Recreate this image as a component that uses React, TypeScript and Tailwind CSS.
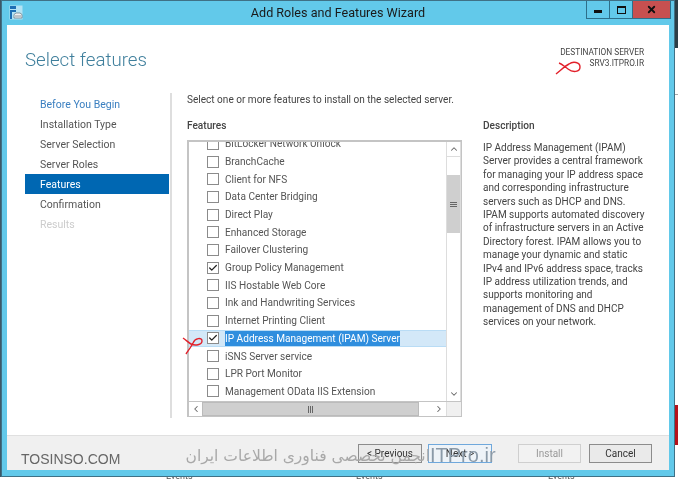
import { Check, ChevronDown, ChevronLeft, ChevronRight, ChevronUp, X } from 'lucide-react';

const steps = [
    { label: 'Before You Begin', className: 'text-[#3a7fc0]' },
    { label: 'Installation Type', className: 'text-[#555]' },
    { label: 'Server Selection', className: 'text-[#555]' },
    { label: 'Server Roles', className: 'text-[#555]' },
    { label: 'Features', className: 'bg-[#0067b2] text-white' },
    { label: 'Confirmation', className: 'text-[#555]' },
    { label: 'Results', className: 'text-[#ccc]' },
];

const features = [
    { label: 'BitLocker Network Unlock' },
    { label: 'BranchCache' },
    { label: 'Client for NFS' },
    { label: 'Data Center Bridging' },
    { label: 'Direct Play' },
    { label: 'Enhanced Storage' },
    { label: 'Failover Clustering' },
    { label: 'Group Policy Management', checked: true },
    { label: 'IIS Hostable Web Core' },
    { label: 'Ink and Handwriting Services' },
    { label: 'Internet Printing Client' },
    { label: 'IP Address Management (IPAM) Server', checked: true, selected: true },
    { label: 'iSNS Server service' },
    { label: 'LPR Port Monitor' },
    { label: 'Management OData IIS Extension' },
];

const description = [
    'IP Address Management (IPAM)',
    'Server provides a central framework',
    'for managing your IP address space',
    'and corresponding infrastructure',
    'servers such as DHCP and DNS.',
    'IPAM supports automated discovery',
    'of infrastructure servers in an Active',
    'Directory forest. IPAM allows you to',
    'manage your dynamic and static',
    'IPv4 and IPv6 address space, tracks',
    'IP address utilization trends, and',
    'supports monitoring and',
    'management of DNS and DHCP',
    'services on your network.',
];

function WizardIcon() {
    return (
        <svg width="14" height="15" viewBox="0 0 14 15">
            <rect x="0.5" y="0.5" width="13" height="14" fill="#d6eef8" opacity="0.7" />
            <rect x="1" y="1" width="6" height="3" fill="#1c6fb4" />
            <rect x="1" y="5" width="6" height="2" fill="#1c6fb4" />
            <rect x="1" y="5" width="2" height="9" fill="#1c6fb4" />
            <path d="M5 13V9.5L7 8h4l2 1.5V13z" fill="#f3f3f3" stroke="#6b7f8c" strokeWidth="0.8" />
            <path d="M6 11h6" stroke="#6b7f8c" strokeWidth="0.8" />
        </svg>
    );
}

function WindowButton({ kind }: { kind: 'min' | 'max' }) {
    return (
        <div className="w-[23px] h-[18px] border-l border-b border-[#2d6f8a] flex items-center justify-center">
            {kind === 'min' ? (
                <div className="w-[8px] h-[3px] mt-[3px] bg-[#111]" />
            ) : (
                <div className="w-[9px] h-[8px] border border-t-2 border-[#111]" />
            )}
        </div>
    );
}

function FeatureRow({ label, checked, selected }: { label: string; checked?: boolean; selected?: boolean }) {
    return (
        <div className={`h-[17.7px] shrink-0 flex items-center pl-[18px] ${selected ? 'bg-[#d3e8f8] border-y border-[#b9dcf5]' : ''}`}>
            <div className="w-[12px] h-[12px] border border-[#8b8b8b] bg-white flex items-center justify-center shrink-0">
                {checked && <Check className="w-[10px] h-[10px] text-[#222]" strokeWidth={3} />}
            </div>
            <span className={`ml-[6px] text-[10.1px] whitespace-nowrap ${selected ? 'bg-[#2f8ede] text-white' : 'text-[#555]'}`}>{label}</span>
        </div>
    );
}

function Grip({ vertical }: { vertical?: boolean }) {
    return (
        <div className={`flex items-center justify-center gap-px ${vertical ? 'flex-col' : ''}`}>
            <div className={`bg-[#666] ${vertical ? 'w-[7px] h-px' : 'w-px h-[7px]'}`} />
            <div className={`bg-[#666] ${vertical ? 'w-[7px] h-px' : 'w-px h-[7px]'}`} />
            <div className={`bg-[#666] ${vertical ? 'w-[7px] h-px' : 'w-px h-[7px]'}`} />
        </div>
    );
}

function FeatureList() {
    return (
        <div className="w-[275px] h-[277px] border-2 border-[#c4c4c4] border-r border-b flex flex-col">
            <div className="flex-1 flex min-h-0">
                <div className="flex-1 overflow-hidden">
                    <div className="mt-[-7px]">
                        {features.map((f) => (
                            <FeatureRow key={f.label} {...f} />
                        ))}
                    </div>
                </div>
                <div className="w-[15px] border-x border-[#ddd] flex flex-col">
                    <div className="h-[15px] border-b border-[#ddd] flex items-center justify-center">
                        <ChevronUp className="w-[10px] h-[10px] text-[#666]" strokeWidth={2.5} />
                    </div>
                    <div className="mt-[18px] h-[58px] bg-[#cfcfcf] flex items-center justify-center">
                        <Grip vertical />
                    </div>
                    <div className="mt-auto h-[15px] flex items-center justify-center">
                        <ChevronDown className="w-[10px] h-[10px] text-[#666]" strokeWidth={2.5} />
                    </div>
                </div>
            </div>
            <div className="h-[15px] border-t border-[#c4c4c4] flex items-stretch shrink-0">
                <div className="w-[13px] flex items-center justify-center">
                    <ChevronLeft className="w-[10px] h-[10px] text-[#666]" strokeWidth={2.5} />
                </div>
                <div className="w-[217px] bg-[#cfcfcf] border border-[#bbb] flex items-center justify-center">
                    <Grip />
                </div>
                <div className="flex-1 flex items-center justify-end pr-[2px]">
                    <ChevronRight className="w-[10px] h-[10px] text-[#666]" strokeWidth={2.5} />
                </div>
                <div className="w-[15px] bg-[#f0f0f0] border-l border-[#ddd]" />
            </div>
        </div>
    );
}

export default function App() {
    return (
        <div className="w-[678px] h-[480px] relative overflow-hidden bg-white flex flex-col font-['Roboto',sans-serif] blur-[0.3px]">
            <div className="h-[477px] flex shrink-0">
                <div className="w-px bg-[#3d5868]" />
                <div className="w-[674px] bg-[#62c9ea] border-x border-b border-[#3f7186] flex flex-col">
                    {/* Title bar */}
                    <div className="h-[25px] grid grid-cols-[1fr_auto_1fr] shrink-0 border-t border-[#3f7186]">
                        <div className="pl-[7px] pt-[4px]">
                            <WizardIcon />
                        </div>
                        <div className="text-[12.6px] leading-[24px] text-[#1a1a1a]">Add Roles and Features Wizard</div>
                        <div className="flex justify-end items-start pr-[3px]">
                            <WindowButton kind="min" />
                            <WindowButton kind="max" />
                            <div className="w-[39px] h-[18px] bg-[#c75050] border-x border-b border-[#2d6f8a] flex items-center justify-center">
                                <X className="w-[11px] h-[11px] text-[#111]" strokeWidth={4} />
                            </div>
                        </div>
                    </div>

                    {/* Panel */}
                    <div className="flex-1 mx-[5px] mb-[6px] bg-white flex flex-col min-h-0">
                        <div className="h-[68px] shrink-0 flex justify-between pl-[18px] pr-[25px]">
                            <div className="pt-[21px] text-[18.7px] leading-[28px] font-light text-[#3f7f9c]">Select features</div>
                            <div className="pt-[22px] text-right text-[8.3px] leading-[11px] text-[#444]">
                                <div>DESTINATION SERVER</div>
                                <div>SRV3.ITPRO.IR</div>
                            </div>
                        </div>

                        <div className="flex-1 flex min-h-0">
                            <div className="ml-[18px] w-[144px] shrink-0 pt-px h-[325px]">
                                {steps.map((s) => (
                                    <div key={s.label} className={`h-[20px] pl-[15px] text-[10.5px] leading-[21px] ${s.className}`}>
                                        {s.label}
                                    </div>
                                ))}
                            </div>
                            <div className="ml-px w-[2px] h-[325px] bg-[#dedede]" />
                            <div className="ml-[15px] flex flex-col">
                                <div className="pt-px text-[10.05px] leading-[12px] text-[#444]">
                                    Select one or more features to install on the selected server.
                                </div>
                                <div className="flex mt-[13px] gap-[21px]">
                                    <div>
                                        <div className="h-[21px] text-[10.1px] leading-[13px] font-medium text-[#444]">Features</div>
                                        <FeatureList />
                                    </div>
                                    <div className="w-[180px]">
                                        <div className="h-[15px] text-[10.1px] leading-[13px] font-medium text-[#444]">Description</div>
                                        <div className="mt-[7px] text-[10px] leading-[13.4px] text-[#444] whitespace-nowrap">
                                            {description.map((line) => (
                                                <div key={line}>{line}</div>
                                            ))}
                                        </div>
                                    </div>
                                </div>
                            </div>
                        </div>

                        {/* Footer */}
                        <div className="h-[35px] shrink-0 bg-[#f0f0f0] border-t border-[#e0e0e0] flex justify-end pt-[8px] pr-[17px] text-[10px] text-[#333]">
                            <button className="w-[64px] h-[19px] border border-[#8c8c8c] bg-[#eaeaea] leading-[16px]">&lt; Previous</button>
                            <button className="ml-[6px] w-[64px] h-[19px] border border-[#6fa8dc] bg-[#eef3f8] leading-[16px]">Next &gt;</button>
                            <button className="ml-[26px] w-[63px] h-[19px] border border-[#cfcfcf] bg-[#f2f2f2] text-[#999] leading-[16px]">Install</button>
                            <button className="ml-[8px] w-[63px] h-[19px] border border-[#8c8c8c] bg-[#eaeaea] leading-[16px]">Cancel</button>
                        </div>
                    </div>
                </div>
                <div className="w-[3px] flex flex-col">
                    <div className="h-[48px] bg-[#2c3e46]" />
                    <div className="h-[47px] bg-white border-b border-[#aaa]" />
                    <div className="h-[310px] bg-white" />
                    <div className="h-[40px] bg-[#b5121b]" />
                </div>
            </div>

            {/* Desktop behind the window */}
            <div className="h-[3px] relative overflow-hidden text-[9px] leading-[9px] text-[#555]">
                <span className="absolute left-[166px] top-[-5px]">Events</span>
                <span className="absolute left-[356px] top-[-5px]">Events</span>
                <span className="absolute left-[548px] top-[-5px]">Events</span>
            </div>

            {/* Watermarks and pen marks on top of the capture */}
            <div className="absolute left-[21px] top-[450px] text-[14px] leading-[18px] text-[#666] font-['Liberation_Sans',sans-serif] pointer-events-none">
                TOSINSO.COM
            </div>
            <div
                dir="rtl"
                className="absolute left-[182px] top-[446px] w-[248px] whitespace-nowrap text-[15.5px] leading-[20px] text-[#a8a8a8] font-['DejaVu_Sans',sans-serif] pointer-events-none"
            >
                انجمن تخصصی فناوری اطلاعات ایران
            </div>
            <div className="absolute left-[430px] top-[444px] text-[20px] leading-[22px] text-[#8b9aa8] font-['Liberation_Sans',sans-serif] pointer-events-none">
                ITPro.ir
            </div>
            <svg className="absolute left-[553px] top-[58px] pointer-events-none" width="30" height="18" viewBox="0 0 30 18" fill="none">
                <path d="M3 16C8 12 12 8 16 6C20 3 27 4 27 9C27 14 20 15 15 11C12 9 9 6 6 5" stroke="#e2202a" strokeWidth="1.4" />
            </svg>
            <svg className="absolute left-[180px] top-[335px] pointer-events-none" width="26" height="22" viewBox="0 0 26 22" fill="none">
                <path d="M3 3C6 5 9 8 11 9C15 11 22 10 22 6C22 2 15 3 13 8C11 12 8 16 6 19" stroke="#e2202a" strokeWidth="1.4" />
            </svg>
        </div>
    );
}
